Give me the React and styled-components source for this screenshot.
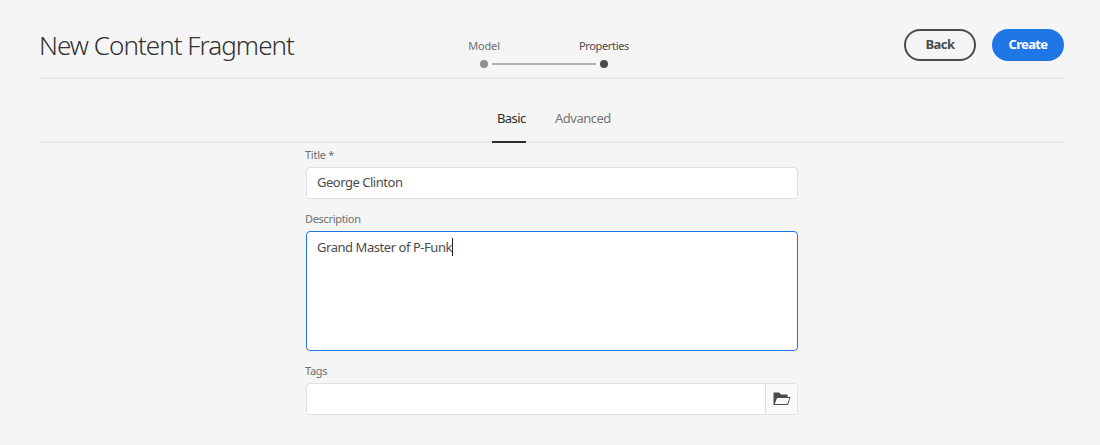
import React from "react";
import styled, { createGlobalStyle } from "styled-components";

const Global = createGlobalStyle`
  * { box-sizing: border-box; }
  body {
    margin: 0;
    background: #f5f5f5;
    color: #4b4b4b;
    font-family: "Noto Sans", "Open Sans", sans-serif;
    font-size: 13px;
    overflow: hidden;
  }
`;

const Page = styled.main`
  height: 445px;
  padding: 0 36px 0 39px;
`;

const Header = styled.header`
  display: grid;
  grid-template-columns: 385px 240px 1fr;
  height: 79px;
  border-bottom: 2px solid #e9e9e9;
`;

const Heading = styled.h1`
  margin: 0;
  padding-top: 27px;
  font-size: 26px;
  line-height: 36px;
  font-weight: 300;
  letter-spacing: -0.97px;
  color: #323232;
  white-space: nowrap;
`;

const Steps = styled.ol`
  display: flex;
  list-style: none;
  margin: 0;
  padding: 38px 0 0;
`;

const Step = styled.li`
  position: relative;
  width: 120px;
  display: flex;
  flex-direction: column;
  align-items: center;
  gap: 6px;
  font-size: 11px;
  line-height: 16px;
  color: ${(p) => (p.$active ? "#4b4b4b" : "#6e6e6e")};
  &::after {
    content: "";
    width: 8px;
    height: 8px;
    border-radius: 50%;
    background: ${(p) => (p.$active ? "#4b4b4b" : "#8e8e8e")};
  }
  li + &::before {
    content: "";
    position: absolute;
    left: -52px;
    top: 25px;
    width: 104px;
    height: 2px;
    background: #b3b3b3;
  }
`;

const Actions = styled.div`
  display: flex;
  justify-content: flex-end;
  gap: 16px;
  padding-top: 29px;
`;

const Button = styled.button`
  width: 72px;
  height: 32px;
  padding: 0 0 2px;
  border-radius: 16px;
  border: 2px solid ${(p) => (p.$primary ? "#1f77e6" : "#4b4b4b")};
  background: ${(p) => (p.$primary ? "#1f77e6" : "transparent")};
  color: ${(p) => (p.$primary ? "#fff" : "#4b4b4b")};
  font: inherit;
  font-weight: 700;
`;

const Tabs = styled.nav`
  display: flex;
  gap: 24px;
  height: 64px;
  padding: 29px 0 0 453px;
  border-bottom: 2px solid #e9e9e9;
`;

const Tab = styled.a`
  height: 35px;
  min-width: 34px;
  padding-left: 5px;
  line-height: 20px;
  color: ${(p) => (p.$active ? "#2c2c2c" : "#747474")};
  border-bottom: 2px solid ${(p) => (p.$active ? "#2c2c2c" : "transparent")};
`;

const Form = styled.form`
  width: 492px;
  margin-left: 267px;
`;

const Field = styled.div`
  padding-bottom: 8px;
`;

const Label = styled.div`
  height: 24px;
  padding-top: 4px;
  margin-left: -1px;
  font-size: 11px;
  line-height: 16px;
  color: #6e6e6e;
`;

const Box = styled.div`
  display: flex;
  height: ${(p) => (p.$tall ? "120px" : "32px")};
  padding: ${(p) => (p.$tall ? "5px" : "4px")} 0 0 10px;
  border: 1px solid ${(p) => (p.$focused ? "#1f77e6" : "#e1e1e1")};
  border-radius: 4px;
  background: #fff;
  line-height: 20px;
`;

const Caret = styled.span`
  width: 1px;
  height: 18px;
  margin-top: 1px;
  background: #222;
`;

const TagBox = styled(Box)`
  padding: 0;
  justify-content: flex-end;
  overflow: hidden;
`;

const Browse = styled.button`
  display: flex;
  align-items: center;
  justify-content: center;
  width: 32px;
  padding: 0 0 0 1px;
  border: 0;
  border-left: 1px solid #e1e1e1;
  background: #fafafa;
`;

const Text = styled.span`
  letter-spacing: ${(p) => p.$spacing || 0}px;
  white-space: nowrap;
`;

export default function App() {
  return (
    <Page>
      <Global />
      <Header>
        <Heading>New Content Fragment</Heading>
        <Steps>
          <Step><Text $spacing={-0.15}>Model</Text></Step>
          <Step $active><Text $spacing={-0.33}>Properties</Text></Step>
        </Steps>
        <Actions>
          <Button><Text $spacing={-0.5}>Back</Text></Button>
          <Button $primary><Text $spacing={-0.65}>Create</Text></Button>
        </Actions>
      </Header>
      <Tabs>
        <Tab $active><Text $spacing={-0.6}>Basic</Text></Tab>
        <Tab><Text $spacing={-0.5}>Advanced</Text></Tab>
      </Tabs>
      <Form>
        <Field>
          <Label><Text $spacing={-0.25}>Title *</Text></Label>
          <Box><Text $spacing={-0.48}>George Clinton</Text></Box>
        </Field>
        <Field>
          <Label><Text $spacing={-0.32}>Description</Text></Label>
          <Box $tall $focused><Text $spacing={-0.45}>Grand Master of P-Funk</Text><Caret /></Box>
        </Field>
        <Field>
          <Label><Text $spacing={-0.3}>Tags</Text></Label>
          <TagBox>
            <Browse type="button" aria-label="Browse tags">
              <svg width="18" height="14" viewBox="0 0 18 14">
                <path fill="#4b4b4b" fillRule="evenodd" d="M.5 13V1Q.5.5 1 .5h4.6q.4 0 .7.3L8 2.5h6q.6 0 .6.6V5H17q.6 0 .4.6l-2.3 7.1q-.1.4-.6.4H1q-.5 0-.5-.1ZM4.1 6 1.7 12.1h12.6L16.4 6Z" />
              </svg>
            </Browse>
          </TagBox>
        </Field>
      </Form>
    </Page>
  );
}
